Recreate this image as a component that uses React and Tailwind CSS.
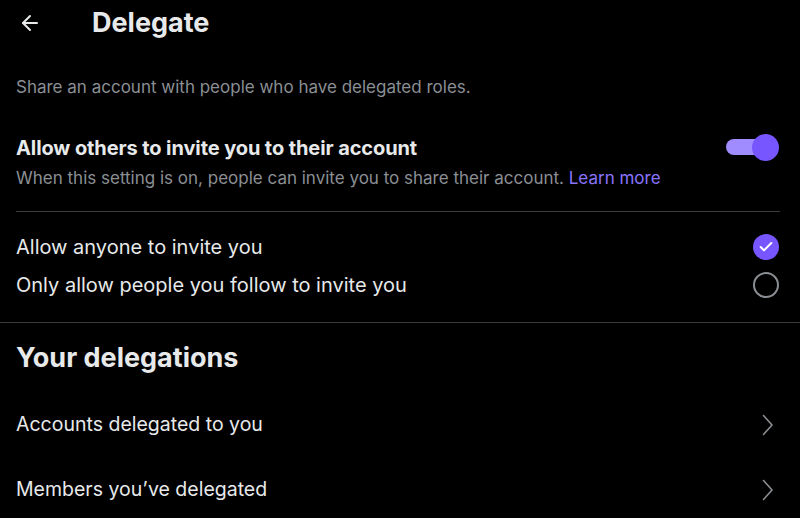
import { ArrowLeft, Check } from 'lucide-react'

const font = { fontFamily: 'Inter, "Noto Sans", sans-serif' }

function Chevron() {
  return (
    <svg width="12" height="22" viewBox="0 0 12 22" fill="none" className="text-[#8b8f94]">
      <path d="M1.5 1.5 10 11 1.5 20.5" stroke="currentColor" strokeWidth="1.6" strokeLinecap="round" strokeLinejoin="round" />
    </svg>
  )
}

function Row({ label }) {
  return (
    <div className="flex h-[65px] items-center justify-between pl-4 pr-[26px]">
      <span className="text-[19.5px] text-[#e7e9ea]">{label}</span>
      <Chevron />
    </div>
  )
}

export default function App() {
  return (
    <div className="h-[518px] w-[800px] overflow-hidden bg-black text-[#e7e9ea]" style={font}>
      <header className="flex h-[46px] items-center">
        <div className="flex w-[92px] items-center pl-[18px]">
          <ArrowLeft size={24} strokeWidth={2} />
        </div>
        <h1 className="text-[27px] font-bold">Delegate</h1>
      </header>

      <p className="mt-[29px] px-4 text-[17px] text-[#8b8f94]">
        Share an account with people who have delegated roles.
      </p>

      <section className="ml-4 mr-5 mt-[32px] border-b border-[#3a3d40] pb-[20px]">
        <div className="flex items-center justify-between">
          <h2 className="text-[20px] font-bold tracking-[-0.1px]">Allow others to invite you to their account</h2>
          <div className="relative mr-[1px] h-[27px] w-[53px]">
            <div className="absolute left-0 top-[5px] h-[16px] w-[44px] rounded-full bg-[#a08cff]" />
            <div className="absolute right-0 top-0 h-[27px] w-[27px] rounded-full bg-[#7856ff]" />
          </div>
        </div>
        <p className="mt-[3px] text-[17px] text-[#8b8f94]">
          When this setting is on, people can invite you to share their account.{' '}
          <span className="text-[#8a74ff]">Learn more</span>
        </p>
      </section>

      <section className="border-b border-[#3a3d40] pb-[23px] pt-[21px]">
        <div className="flex h-[28px] items-center justify-between pl-4 pr-[21px]">
          <span className="text-[20px]">Allow anyone to invite you</span>
          <div className="flex h-[26px] w-[26px] items-center justify-center rounded-full bg-[#7856ff]">
            <Check size={16} strokeWidth={3} className="text-white" />
          </div>
        </div>
        <div className="mt-[10px] flex h-[28px] items-center justify-between pl-4 pr-[21px]">
          <span className="text-[20px]">Only allow people you follow to invite you</span>
          <div className="h-[26px] w-[26px] rounded-full border-2 border-[#8b8f94]" />
        </div>
      </section>

      <h2 className="mt-[15px] px-4 text-[27px] font-bold">Your delegations</h2>

      <div className="mt-[14px]">
        <Row label="Accounts delegated to you" />
        <Row label="Members you’ve delegated" />
      </div>
    </div>
  )
}
